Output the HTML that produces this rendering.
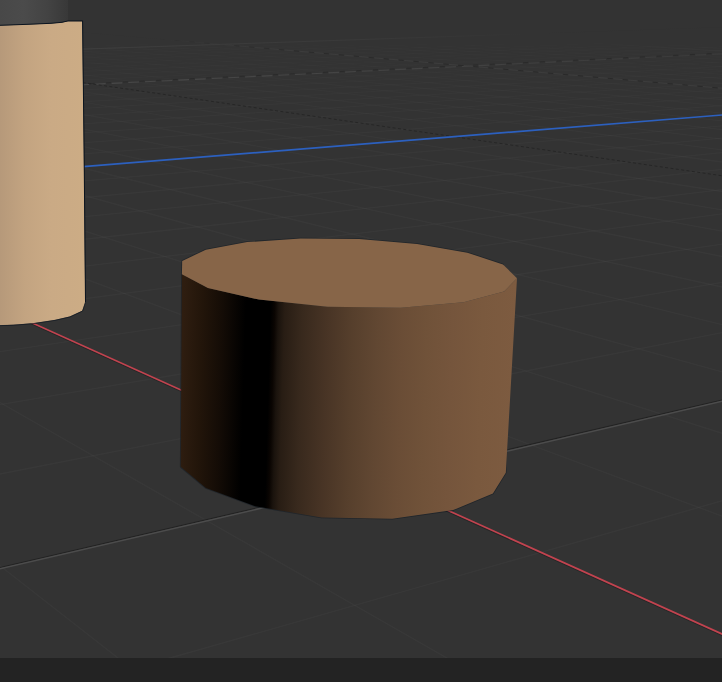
<!DOCTYPE html>
<html><head><meta charset="utf-8"><title>Viewport</title>
<style>html,body{margin:0;padding:0;background:#333333;overflow:hidden}svg{display:block}</style>
</head><body>
<svg width="722" height="682" viewBox="0 0 722 682">
<defs>
<linearGradient id="gs" gradientUnits="userSpaceOnUse" x1="181.0" y1="400" x2="512.70" y2="409.95"><stop offset="0.0000" stop-color="#2e1d10"/><stop offset="0.0572" stop-color="#22150a"/><stop offset="0.1175" stop-color="#140c06"/><stop offset="0.1867" stop-color="#000000"/><stop offset="0.2620" stop-color="#000000"/><stop offset="0.2741" stop-color="#0a0502"/><stop offset="0.2861" stop-color="#1a130d"/><stop offset="0.3042" stop-color="#281d14"/><stop offset="0.3584" stop-color="#38291d"/><stop offset="0.4337" stop-color="#483425"/><stop offset="0.5090" stop-color="#563f2c"/><stop offset="0.5843" stop-color="#614732"/><stop offset="0.6596" stop-color="#6a4d36"/><stop offset="0.7349" stop-color="#705239"/><stop offset="0.8102" stop-color="#75553c"/><stop offset="0.9006" stop-color="#7a593e"/><stop offset="1.0000" stop-color="#7d5b40"/></linearGradient>
<linearGradient id="gb" gradientUnits="userSpaceOnUse" x1="0" y1="0" x2="85" y2="0">
<stop offset="0" stop-color="#b6997a"/><stop offset="0.3" stop-color="#c3a481"/><stop offset="0.6" stop-color="#caaa85"/><stop offset="1" stop-color="#ccac85"/>
</linearGradient>
<linearGradient id="gd" gradientUnits="userSpaceOnUse" x1="0" y1="0" x2="68" y2="0">
<stop offset="0" stop-color="#484848"/><stop offset="0.35" stop-color="#4b4b4b"/><stop offset="0.7" stop-color="#434343"/><stop offset="1" stop-color="#383838"/>
</linearGradient>
<linearGradient id="gl" gradientUnits="userSpaceOnUse" x1="84" y1="0" x2="722" y2="0"><stop offset="0" stop-color="#484848"/><stop offset="0.5" stop-color="#434343"/><stop offset="1" stop-color="#3a3a3a"/></linearGradient>
<linearGradient id="gl2" gradientUnits="userSpaceOnUse" x1="150" y1="0" x2="722" y2="0"><stop offset="0" stop-color="#323232"/><stop offset="0.25" stop-color="#3c3c3c"/><stop offset="1" stop-color="#3c3c3c"/></linearGradient>
<linearGradient id="gl3" gradientUnits="userSpaceOnUse" x1="150" y1="0" x2="722" y2="0"><stop offset="0" stop-color="#323232"/><stop offset="0.3" stop-color="#2a2a2a"/><stop offset="1" stop-color="#292929"/></linearGradient>
<linearGradient id="gl4" gradientUnits="userSpaceOnUse" x1="84" y1="0" x2="560" y2="0"><stop offset="0" stop-color="#3d3d3d"/><stop offset="0.6" stop-color="#393939"/><stop offset="1" stop-color="#323232"/></linearGradient>
<linearGradient id="fm" gradientUnits="userSpaceOnUse" x1="0" y1="0" x2="0" y2="682"><stop offset="0.0000" stop-color="#fff" stop-opacity="0.000"/><stop offset="0.0440" stop-color="#fff" stop-opacity="0.000"/><stop offset="0.0528" stop-color="#fff" stop-opacity="0.000"/><stop offset="0.0616" stop-color="#fff" stop-opacity="0.036"/><stop offset="0.0704" stop-color="#fff" stop-opacity="0.320"/><stop offset="0.0806" stop-color="#fff" stop-opacity="0.320"/><stop offset="0.1026" stop-color="#fff" stop-opacity="0.392"/><stop offset="0.1246" stop-color="#fff" stop-opacity="0.518"/><stop offset="0.1466" stop-color="#fff" stop-opacity="0.617"/><stop offset="0.1760" stop-color="#fff" stop-opacity="0.721"/><stop offset="0.2053" stop-color="#fff" stop-opacity="0.801"/><stop offset="0.2346" stop-color="#fff" stop-opacity="0.866"/><stop offset="0.2786" stop-color="#fff" stop-opacity="0.942"/><stop offset="0.3226" stop-color="#fff" stop-opacity="1.000"/><stop offset="0.3812" stop-color="#fff" stop-opacity="1.000"/><stop offset="0.4399" stop-color="#fff" stop-opacity="1.000"/><stop offset="1.0000" stop-color="#fff" stop-opacity="1.000"/></linearGradient>
<mask id="fade" maskUnits="userSpaceOnUse" x="0" y="0" width="722" height="682"><rect width="722" height="682" fill="url(#fm)"/></mask>
</defs>
<rect width="722" height="682" fill="#333333"/>
<g id="grid" mask="url(#fade)" stroke-linecap="butt">
<line x1="-763.1" y1="3.9" x2="1599.9" y2="-25.1" stroke="#ffffff" stroke-width="1.3" stroke-opacity="0.027" />
<line x1="-762.9" y1="4.5" x2="1599.7" y2="-24.9" stroke="#ffffff" stroke-width="1.3" stroke-opacity="0.027" />
<line x1="-762.7" y1="5.0" x2="1599.5" y2="-24.8" stroke="#ffffff" stroke-width="1.3" stroke-opacity="0.027" />
<line x1="-762.5" y1="5.5" x2="1599.4" y2="-24.6" stroke="#ffffff" stroke-width="1.3" stroke-opacity="0.027" />
<line x1="-762.3" y1="6.1" x2="1599.2" y2="-24.4" stroke="#ffffff" stroke-width="1.3" stroke-opacity="0.027" />
<line x1="-762.2" y1="6.6" x2="1599.0" y2="-24.2" stroke="#ffffff" stroke-width="1.3" stroke-opacity="0.027" />
<line x1="-761.8" y1="7.8" x2="1598.7" y2="-23.9" stroke="#ffffff" stroke-width="1.3" stroke-opacity="0.027" />
<line x1="-761.6" y1="8.4" x2="1598.5" y2="-23.7" stroke="#ffffff" stroke-width="1.3" stroke-opacity="0.027" />
<line x1="-761.3" y1="9.0" x2="1598.3" y2="-23.5" stroke="#ffffff" stroke-width="1.3" stroke-opacity="0.027" />
<line x1="-761.1" y1="9.7" x2="1598.1" y2="-23.3" stroke="#ffffff" stroke-width="1.3" stroke-opacity="0.027" />
<line x1="-760.9" y1="10.3" x2="1597.9" y2="-23.1" stroke="#ffffff" stroke-width="1.3" stroke-opacity="0.027" />
<line x1="-760.7" y1="11.0" x2="1597.7" y2="-22.9" stroke="#ffffff" stroke-width="1.3" stroke-opacity="0.027" />
<line x1="-760.4" y1="11.7" x2="1597.5" y2="-22.7" stroke="#ffffff" stroke-width="1.3" stroke-opacity="0.027" />
<line x1="-760.2" y1="12.4" x2="1597.3" y2="-22.5" stroke="#ffffff" stroke-width="1.3" stroke-opacity="0.027" />
<line x1="-760.0" y1="13.1" x2="1597.1" y2="-22.3" stroke="#ffffff" stroke-width="1.3" stroke-opacity="0.027" />
<line x1="-759.5" y1="14.6" x2="1596.7" y2="-21.8" stroke="#ffffff" stroke-width="1.3" stroke-opacity="0.027" />
<line x1="-759.2" y1="15.4" x2="1596.4" y2="-21.6" stroke="#ffffff" stroke-width="1.3" stroke-opacity="0.027" />
<line x1="-758.9" y1="16.2" x2="1596.2" y2="-21.3" stroke="#ffffff" stroke-width="1.3" stroke-opacity="0.027" />
<line x1="-758.6" y1="17.0" x2="1595.9" y2="-21.1" stroke="#ffffff" stroke-width="1.3" stroke-opacity="0.027" />
<line x1="-758.4" y1="17.8" x2="1595.7" y2="-20.8" stroke="#ffffff" stroke-width="1.3" stroke-opacity="0.027" />
<line x1="-758.1" y1="18.7" x2="1595.4" y2="-20.5" stroke="#ffffff" stroke-width="1.3" stroke-opacity="0.027" />
<line x1="-757.8" y1="19.6" x2="1595.2" y2="-20.3" stroke="#ffffff" stroke-width="1.3" stroke-opacity="0.027" />
<line x1="-757.4" y1="20.5" x2="1594.9" y2="-20.0" stroke="#ffffff" stroke-width="1.3" stroke-opacity="0.027" />
<line x1="-757.1" y1="21.5" x2="1594.6" y2="-19.7" stroke="#ffffff" stroke-width="1.3" stroke-opacity="0.027" />
<line x1="-756.4" y1="23.5" x2="1599.6" y2="-19.2" stroke="#ffffff" stroke-width="1.3" stroke-opacity="0.027" />
<line x1="-756.1" y1="24.5" x2="1599.4" y2="-18.9" stroke="#ffffff" stroke-width="1.3" stroke-opacity="0.027" />
<line x1="-755.7" y1="25.6" x2="1599.2" y2="-18.5" stroke="#ffffff" stroke-width="1.3" stroke-opacity="0.027" />
<line x1="-755.4" y1="26.7" x2="1599.0" y2="-18.2" stroke="#ffffff" stroke-width="1.3" stroke-opacity="0.027" />
<line x1="-755.0" y1="27.8" x2="1598.7" y2="-17.8" stroke="#ffffff" stroke-width="1.3" stroke-opacity="0.027" />
<line x1="-754.6" y1="29.0" x2="1598.5" y2="-17.5" stroke="#ffffff" stroke-width="1.3" stroke-opacity="0.027" />
<line x1="-754.1" y1="30.2" x2="1598.2" y2="-17.1" stroke="#ffffff" stroke-width="1.3" stroke-opacity="0.027" />
<line x1="-753.7" y1="31.5" x2="1597.9" y2="-16.7" stroke="#ffffff" stroke-width="1.3" stroke-opacity="0.027" />
<line x1="-753.3" y1="32.8" x2="1597.6" y2="-16.3" stroke="#ffffff" stroke-width="1.3" stroke-opacity="0.027" />
<line x1="-752.3" y1="35.6" x2="1597.0" y2="-15.5" stroke="#ffffff" stroke-width="1.3" stroke-opacity="0.027" />
<line x1="-751.8" y1="37.0" x2="1596.7" y2="-15.0" stroke="#ffffff" stroke-width="1.3" stroke-opacity="0.027" />
<line x1="-751.3" y1="38.6" x2="1596.4" y2="-14.5" stroke="#ffffff" stroke-width="1.3" stroke-opacity="0.027" />
<line x1="-750.8" y1="40.1" x2="1596.1" y2="-14.0" stroke="#ffffff" stroke-width="1.3" stroke-opacity="0.027" />
<line x1="-750.2" y1="41.8" x2="1595.7" y2="-13.5" stroke="#ffffff" stroke-width="1.3" stroke-opacity="0.027" />
<line x1="-749.7" y1="43.5" x2="1595.3" y2="-13.0" stroke="#ffffff" stroke-width="1.3" stroke-opacity="0.027" />
<line x1="-749.1" y1="45.2" x2="1595.0" y2="-12.5" stroke="#ffffff" stroke-width="1.3" stroke-opacity="0.027" />
<line x1="-748.4" y1="47.1" x2="1594.6" y2="-11.9" stroke="#ffffff" stroke-width="1.3" stroke-opacity="0.027" />
<line x1="-747.8" y1="49.0" x2="1594.1" y2="-11.3" stroke="#ffffff" stroke-width="1.3" stroke-opacity="0.027" />
<line x1="-746.4" y1="53.1" x2="1593.2" y2="-10.0" stroke="#ffffff" stroke-width="1.3" stroke-opacity="0.027" />
<line x1="-745.6" y1="55.3" x2="1592.8" y2="-9.3" stroke="#ffffff" stroke-width="1.3" stroke-opacity="0.027" />
<line x1="-744.9" y1="57.6" x2="1592.3" y2="-8.6" stroke="#ffffff" stroke-width="1.3" stroke-opacity="0.027" />
<line x1="-744.1" y1="60.0" x2="1591.7" y2="-7.9" stroke="#ffffff" stroke-width="1.3" stroke-opacity="0.027" />
<line x1="-743.2" y1="62.5" x2="1591.2" y2="-7.1" stroke="#ffffff" stroke-width="1.3" stroke-opacity="0.027" />
<line x1="-742.3" y1="65.2" x2="1599.9" y2="-6.5" stroke="#ffffff" stroke-width="1.3" stroke-opacity="0.027" />
<line x1="-741.4" y1="67.9" x2="1599.5" y2="-5.7" stroke="#ffffff" stroke-width="1.3" stroke-opacity="0.027" />
<line x1="-740.4" y1="70.9" x2="1599.1" y2="-4.8" stroke="#ffffff" stroke-width="1.3" stroke-opacity="0.027" />
<line x1="-739.3" y1="74.0" x2="1598.7" y2="-3.8" stroke="#ffffff" stroke-width="1.3" stroke-opacity="0.027" />
<line x1="-737.0" y1="80.7" x2="1597.8" y2="-1.7" stroke="#ffffff" stroke-width="1.3" stroke-opacity="0.027" />
<line x1="-735.8" y1="84.3" x2="1597.4" y2="-0.6" stroke="#ffffff" stroke-width="1.3" stroke-opacity="0.027" />
<line x1="-734.5" y1="88.2" x2="1596.9" y2="0.6" stroke="#ffffff" stroke-width="1.3" stroke-opacity="0.027" />
<line x1="-733.1" y1="92.3" x2="1596.3" y2="1.9" stroke="#ffffff" stroke-width="1.3" stroke-opacity="0.027" />
<line x1="-731.6" y1="96.7" x2="1595.7" y2="3.3" stroke="#ffffff" stroke-width="1.3" stroke-opacity="0.027" />
<line x1="-730.0" y1="101.4" x2="1595.1" y2="4.8" stroke="#ffffff" stroke-width="1.3" stroke-opacity="0.027" />
<line x1="-728.3" y1="106.4" x2="1594.5" y2="6.3" stroke="#ffffff" stroke-width="1.3" stroke-opacity="0.027" />
<line x1="-726.5" y1="111.7" x2="1593.8" y2="8.0" stroke="#ffffff" stroke-width="1.3" stroke-opacity="0.027" />
<line x1="-724.5" y1="117.5" x2="1593.0" y2="9.8" stroke="#ffffff" stroke-width="1.3" stroke-opacity="0.027" />
<line x1="-720.2" y1="130.4" x2="1591.3" y2="13.9" stroke="#ffffff" stroke-width="1.3" stroke-opacity="0.027" />
<line x1="-717.7" y1="137.7" x2="1590.3" y2="16.2" stroke="#ffffff" stroke-width="1.3" stroke-opacity="0.027" />
<line x1="-715.0" y1="145.6" x2="1589.2" y2="18.8" stroke="#ffffff" stroke-width="1.3" stroke-opacity="0.027" />
<line x1="-800.0" y1="-23.5" x2="-793.7" y2="-29.3" stroke="#ffffff" stroke-width="1.3" stroke-opacity="0.027" />
<line x1="-712.1" y1="154.2" x2="1588.1" y2="21.5" stroke="#ffffff" stroke-width="1.3" stroke-opacity="0.027" />
<line x1="-799.9" y1="-8.4" x2="-787.3" y2="-29.3" stroke="#ffffff" stroke-width="1.3" stroke-opacity="0.027" />
<line x1="-708.9" y1="163.6" x2="1586.8" y2="24.6" stroke="#ffffff" stroke-width="1.3" stroke-opacity="0.027" />
<line x1="-800.0" y1="115.9" x2="-780.8" y2="-29.3" stroke="#ffffff" stroke-width="1.3" stroke-opacity="0.027" />
<line x1="-705.4" y1="174.0" x2="1585.4" y2="28.0" stroke="#ffffff" stroke-width="1.3" stroke-opacity="0.027" />
<line x1="-774.4" y1="-29.3" x2="-302.2" y2="1362.2" stroke="#ffffff" stroke-width="1.3" stroke-opacity="0.027" />
<line x1="-701.5" y1="185.5" x2="1583.8" y2="31.7" stroke="#ffffff" stroke-width="1.3" stroke-opacity="0.027" />
<line x1="-768.0" y1="-29.4" x2="173.8" y2="1133.6" stroke="#ffffff" stroke-width="1.3" stroke-opacity="0.027" />
<line x1="-697.1" y1="198.3" x2="1582.0" y2="35.9" stroke="#ffffff" stroke-width="1.3" stroke-opacity="0.027" />
<line x1="-761.6" y1="-29.4" x2="838.4" y2="1221.0" stroke="#ffffff" stroke-width="1.3" stroke-opacity="0.027" />
<line x1="-692.3" y1="212.6" x2="1580.0" y2="40.6" stroke="#ffffff" stroke-width="1.3" stroke-opacity="0.027" />
<line x1="-755.2" y1="-29.4" x2="1103.0" y2="1033.2" stroke="#ffffff" stroke-width="1.3" stroke-opacity="0.027" />
<line x1="-680.6" y1="247.0" x2="1575.2" y2="52.1" stroke="#ffffff" stroke-width="1.3" stroke-opacity="0.027" />
<line x1="-742.6" y1="-29.4" x2="1449.8" y2="787.2" stroke="#ffffff" stroke-width="1.3" stroke-opacity="0.027" />
<line x1="-673.5" y1="267.9" x2="1599.9" y2="56.6" stroke="#ffffff" stroke-width="1.3" stroke-opacity="0.027" />
<line x1="-736.3" y1="-29.4" x2="1569.5" y2="702.2" stroke="#ffffff" stroke-width="1.3" stroke-opacity="0.027" />
<line x1="-665.3" y1="292.1" x2="1598.8" y2="64.4" stroke="#ffffff" stroke-width="1.3" stroke-opacity="0.027" />
<line x1="-730.0" y1="-29.5" x2="1380.6" y2="553.9" stroke="#ffffff" stroke-width="1.3" stroke-opacity="0.027" />
<line x1="-655.7" y1="320.3" x2="1597.5" y2="73.6" stroke="#ffffff" stroke-width="1.3" stroke-opacity="0.027" />
<line x1="-723.8" y1="-29.5" x2="1474.5" y2="508.9" stroke="#ffffff" stroke-width="1.3" stroke-opacity="0.027" />
<line x1="-644.4" y1="353.7" x2="1595.9" y2="84.6" stroke="#ffffff" stroke-width="1.3" stroke-opacity="0.027" />
<line x1="-717.5" y1="-29.5" x2="1555.0" y2="470.2" stroke="#ffffff" stroke-width="1.3" stroke-opacity="0.027" />
<line x1="-630.7" y1="393.9" x2="1594.0" y2="97.9" stroke="#ffffff" stroke-width="1.3" stroke-opacity="0.027" />
<line x1="-711.3" y1="-29.5" x2="1418.7" y2="395.5" stroke="#ffffff" stroke-width="1.3" stroke-opacity="0.027" />
<line x1="-614.0" y1="443.2" x2="1591.6" y2="114.5" stroke="#ffffff" stroke-width="1.3" stroke-opacity="0.027" />
<line x1="-705.2" y1="-29.5" x2="1486.8" y2="370.8" stroke="#ffffff" stroke-width="1.3" stroke-opacity="0.027" />
<line x1="-593.1" y1="505.0" x2="1588.6" y2="135.7" stroke="#ffffff" stroke-width="1.3" stroke-opacity="0.027" />
<line x1="-699.0" y1="-29.5" x2="1547.4" y2="348.8" stroke="#ffffff" stroke-width="1.3" stroke-opacity="0.027" />
<line x1="-566.0" y1="584.8" x2="1584.6" y2="163.7" stroke="#ffffff" stroke-width="1.3" stroke-opacity="0.027" />
<line x1="-692.9" y1="-29.5" x2="1440.8" y2="303.8" stroke="#ffffff" stroke-width="1.3" stroke-opacity="0.027" />
<line x1="-478.5" y1="842.7" x2="1571.0" y2="259.0" stroke="#ffffff" stroke-width="1.3" stroke-opacity="0.027" />
<line x1="-680.7" y1="-29.6" x2="1542.8" y2="274.1" stroke="#ffffff" stroke-width="1.3" stroke-opacity="0.027" />
<line x1="-400.8" y1="1071.6" x2="1558.0" y2="350.5" stroke="#ffffff" stroke-width="1.3" stroke-opacity="0.027" />
<line x1="-674.6" y1="-29.6" x2="1587.4" y2="261.1" stroke="#ffffff" stroke-width="1.3" stroke-opacity="0.027" />
<line x1="579.9" y1="1018.9" x2="1533.3" y2="523.3" stroke="#ffffff" stroke-width="1.3" stroke-opacity="0.027" />
<line x1="-668.6" y1="-29.6" x2="1499.0" y2="233.4" stroke="#ffffff" stroke-width="1.3" stroke-opacity="0.027" />
<line x1="1023.0" y1="1365.2" x2="1469.4" y2="971.1" stroke="#ffffff" stroke-width="1.3" stroke-opacity="0.027" />
<line x1="-662.6" y1="-29.6" x2="1539.6" y2="223.5" stroke="#ffffff" stroke-width="1.3" stroke-opacity="0.027" />
<line x1="-656.6" y1="-29.6" x2="1577.4" y2="214.3" stroke="#ffffff" stroke-width="1.3" stroke-opacity="0.027" />
<line x1="-650.6" y1="-29.6" x2="1502.4" y2="194.3" stroke="#ffffff" stroke-width="1.3" stroke-opacity="0.027" />
<line x1="-644.7" y1="-29.7" x2="1537.3" y2="187.0" stroke="#ffffff" stroke-width="1.3" stroke-opacity="0.027" />
<line x1="-638.7" y1="-29.7" x2="1570.1" y2="180.1" stroke="#ffffff" stroke-width="1.3" stroke-opacity="0.027" />
<line x1="-632.8" y1="-29.7" x2="1505.0" y2="165.0" stroke="#ffffff" stroke-width="1.3" stroke-opacity="0.027" />
<line x1="-621.1" y1="-29.7" x2="1564.5" y2="154.1" stroke="#ffffff" stroke-width="1.3" stroke-opacity="0.027" />
<line x1="-615.2" y1="-29.7" x2="1591.9" y2="149.1" stroke="#ffffff" stroke-width="1.3" stroke-opacity="0.027" />
<line x1="-609.4" y1="-29.7" x2="1534.3" y2="137.8" stroke="#ffffff" stroke-width="1.3" stroke-opacity="0.027" />
<line x1="-603.6" y1="-29.8" x2="1560.1" y2="133.6" stroke="#ffffff" stroke-width="1.3" stroke-opacity="0.027" />
<line x1="-597.8" y1="-29.8" x2="1584.8" y2="129.6" stroke="#ffffff" stroke-width="1.3" stroke-opacity="0.027" />
<line x1="-592.1" y1="-29.8" x2="1533.2" y2="120.4" stroke="#ffffff" stroke-width="1.3" stroke-opacity="0.027" />
<line x1="-586.3" y1="-29.8" x2="1556.6" y2="117.0" stroke="#ffffff" stroke-width="1.3" stroke-opacity="0.027" />
<line x1="-580.6" y1="-29.8" x2="1579.0" y2="113.7" stroke="#ffffff" stroke-width="1.3" stroke-opacity="0.027" />
<line x1="-574.9" y1="-29.8" x2="1532.3" y2="106.2" stroke="#ffffff" stroke-width="1.3" stroke-opacity="0.027" />
<line x1="-563.6" y1="-29.9" x2="1574.2" y2="100.6" stroke="#ffffff" stroke-width="1.3" stroke-opacity="0.027" />
<line x1="-557.9" y1="-29.9" x2="1594.0" y2="97.9" stroke="#ffffff" stroke-width="1.3" stroke-opacity="0.027" />
<line x1="-552.3" y1="-29.9" x2="1551.2" y2="91.8" stroke="#ffffff" stroke-width="1.3" stroke-opacity="0.027" />
<line x1="-546.7" y1="-29.9" x2="1570.2" y2="89.5" stroke="#ffffff" stroke-width="1.3" stroke-opacity="0.027" />
<line x1="-541.1" y1="-29.9" x2="1588.5" y2="87.3" stroke="#ffffff" stroke-width="1.3" stroke-opacity="0.027" />
<line x1="-535.6" y1="-29.9" x2="1549.1" y2="82.1" stroke="#ffffff" stroke-width="1.3" stroke-opacity="0.027" />
<line x1="-530.0" y1="-29.9" x2="1566.8" y2="80.1" stroke="#ffffff" stroke-width="1.3" stroke-opacity="0.027" />
<line x1="-524.5" y1="-30.0" x2="1583.8" y2="78.2" stroke="#ffffff" stroke-width="1.3" stroke-opacity="0.027" />
<line x1="-519.0" y1="-30.0" x2="1547.3" y2="73.7" stroke="#ffffff" stroke-width="1.3" stroke-opacity="0.027" />
<line x1="-508.1" y1="-30.0" x2="1579.7" y2="70.3" stroke="#ffffff" stroke-width="1.3" stroke-opacity="0.027" />
<line x1="-502.6" y1="-30.0" x2="1595.2" y2="68.7" stroke="#ffffff" stroke-width="1.3" stroke-opacity="0.027" />
<line x1="-497.2" y1="-30.0" x2="1561.2" y2="64.8" stroke="#ffffff" stroke-width="1.3" stroke-opacity="0.027" />
<line x1="-491.8" y1="-30.0" x2="1576.2" y2="63.4" stroke="#ffffff" stroke-width="1.3" stroke-opacity="0.027" />
<line x1="-486.4" y1="-30.0" x2="1590.7" y2="62.0" stroke="#ffffff" stroke-width="1.3" stroke-opacity="0.027" />
<line x1="-481.0" y1="-30.1" x2="1558.9" y2="58.6" stroke="#ffffff" stroke-width="1.3" stroke-opacity="0.027" />
<line x1="-475.7" y1="-30.1" x2="1573.0" y2="57.3" stroke="#ffffff" stroke-width="1.3" stroke-opacity="0.027" />
<line x1="-470.4" y1="-30.1" x2="1586.8" y2="56.0" stroke="#ffffff" stroke-width="1.3" stroke-opacity="0.027" />
<line x1="-465.1" y1="-30.1" x2="1556.9" y2="53.0" stroke="#ffffff" stroke-width="1.3" stroke-opacity="0.027" />
<line x1="-454.5" y1="-30.1" x2="1583.3" y2="50.8" stroke="#ffffff" stroke-width="1.3" stroke-opacity="0.027" />
<line x1="-449.2" y1="-30.1" x2="1596.0" y2="49.7" stroke="#ffffff" stroke-width="1.3" stroke-opacity="0.027" />
<line x1="-444.0" y1="-30.1" x2="1567.7" y2="47.1" stroke="#ffffff" stroke-width="1.3" stroke-opacity="0.027" />
<line x1="-438.8" y1="-30.2" x2="1580.1" y2="46.1" stroke="#ffffff" stroke-width="1.3" stroke-opacity="0.027" />
<line x1="-433.6" y1="-30.2" x2="1592.2" y2="45.1" stroke="#ffffff" stroke-width="1.3" stroke-opacity="0.027" />
<line x1="-428.4" y1="-30.2" x2="1565.5" y2="42.7" stroke="#ffffff" stroke-width="1.3" stroke-opacity="0.027" />
<line x1="-423.2" y1="-30.2" x2="1577.3" y2="41.8" stroke="#ffffff" stroke-width="1.3" stroke-opacity="0.027" />
<line x1="-418.1" y1="-30.2" x2="1588.8" y2="40.9" stroke="#ffffff" stroke-width="1.3" stroke-opacity="0.027" />
<line x1="-412.9" y1="-30.2" x2="1563.5" y2="38.8" stroke="#ffffff" stroke-width="1.3" stroke-opacity="0.027" />
<line x1="-402.7" y1="-30.2" x2="1585.7" y2="37.2" stroke="#ffffff" stroke-width="1.3" stroke-opacity="0.027" />
<line x1="-397.6" y1="-30.3" x2="1596.5" y2="36.4" stroke="#ffffff" stroke-width="1.3" stroke-opacity="0.027" />
<line x1="-392.6" y1="-30.3" x2="1572.4" y2="34.5" stroke="#ffffff" stroke-width="1.3" stroke-opacity="0.027" />
<line x1="-387.5" y1="-30.3" x2="1582.9" y2="33.7" stroke="#ffffff" stroke-width="1.3" stroke-opacity="0.027" />
<line x1="-382.5" y1="-30.3" x2="1593.3" y2="33.0" stroke="#ffffff" stroke-width="1.3" stroke-opacity="0.027" />
<line x1="-377.5" y1="-30.3" x2="1570.3" y2="31.3" stroke="#ffffff" stroke-width="1.3" stroke-opacity="0.027" />
<line x1="-372.5" y1="-30.3" x2="1580.4" y2="30.6" stroke="#ffffff" stroke-width="1.3" stroke-opacity="0.027" />
<line x1="-367.5" y1="-30.3" x2="1590.3" y2="30.0" stroke="#ffffff" stroke-width="1.3" stroke-opacity="0.027" />
<line x1="-362.5" y1="-30.3" x2="1568.3" y2="28.4" stroke="#ffffff" stroke-width="1.3" stroke-opacity="0.027" />
<line x1="-352.7" y1="-30.4" x2="1587.6" y2="27.1" stroke="#ffffff" stroke-width="1.3" stroke-opacity="0.027" />
<line x1="-347.7" y1="-30.4" x2="1596.9" y2="26.5" stroke="#ffffff" stroke-width="1.3" stroke-opacity="0.027" />
<line x1="-342.8" y1="-30.4" x2="1575.9" y2="25.1" stroke="#ffffff" stroke-width="1.3" stroke-opacity="0.027" />
<line x1="-338.0" y1="-30.4" x2="1585.0" y2="24.5" stroke="#ffffff" stroke-width="1.3" stroke-opacity="0.027" />
<line x1="-333.1" y1="-30.4" x2="1594.0" y2="24.0" stroke="#ffffff" stroke-width="1.3" stroke-opacity="0.027" />
<line x1="-328.2" y1="-30.4" x2="1573.9" y2="22.7" stroke="#ffffff" stroke-width="1.3" stroke-opacity="0.027" />
<line x1="-323.4" y1="-30.4" x2="1582.7" y2="22.1" stroke="#ffffff" stroke-width="1.3" stroke-opacity="0.027" />
<line x1="-318.6" y1="-30.4" x2="1591.4" y2="21.6" stroke="#ffffff" stroke-width="1.3" stroke-opacity="0.027" />
<line x1="-313.8" y1="-30.5" x2="1600.0" y2="21.1" stroke="#ffffff" stroke-width="1.3" stroke-opacity="0.027" />
<line x1="-304.2" y1="-30.5" x2="1588.9" y2="19.4" stroke="#ffffff" stroke-width="1.3" stroke-opacity="0.027" />
<line x1="-299.5" y1="-30.5" x2="1597.2" y2="19.0" stroke="#ffffff" stroke-width="1.3" stroke-opacity="0.027" />
<line x1="-294.7" y1="-30.5" x2="1578.5" y2="17.8" stroke="#ffffff" stroke-width="1.3" stroke-opacity="0.027" />
<line x1="-290.0" y1="-30.5" x2="1586.7" y2="17.4" stroke="#ffffff" stroke-width="1.3" stroke-opacity="0.027" />
<line x1="-285.3" y1="-30.5" x2="1594.7" y2="17.0" stroke="#ffffff" stroke-width="1.3" stroke-opacity="0.027" />
<line x1="-280.6" y1="-30.5" x2="1576.7" y2="15.9" stroke="#ffffff" stroke-width="1.3" stroke-opacity="0.027" />
<line x1="-275.9" y1="-30.5" x2="1584.5" y2="15.5" stroke="#ffffff" stroke-width="1.3" stroke-opacity="0.027" />
<line x1="-271.3" y1="-30.6" x2="1592.3" y2="15.1" stroke="#ffffff" stroke-width="1.3" stroke-opacity="0.027" />
<line x1="-266.6" y1="-30.6" x2="1599.9" y2="14.7" stroke="#ffffff" stroke-width="1.3" stroke-opacity="0.027" />
<line x1="-257.4" y1="-30.6" x2="1590.1" y2="13.3" stroke="#ffffff" stroke-width="1.3" stroke-opacity="0.027" />
<line x1="-252.8" y1="-30.6" x2="1597.5" y2="13.0" stroke="#ffffff" stroke-width="1.3" stroke-opacity="0.027" />
<line x1="-248.2" y1="-30.6" x2="1580.7" y2="12.1" stroke="#ffffff" stroke-width="1.3" stroke-opacity="0.027" />
<line x1="-243.6" y1="-30.6" x2="1588.0" y2="11.7" stroke="#ffffff" stroke-width="1.3" stroke-opacity="0.027" />
<line x1="-239.0" y1="-30.6" x2="1595.2" y2="11.4" stroke="#ffffff" stroke-width="1.3" stroke-opacity="0.027" />
<line x1="-234.5" y1="-30.6" x2="1578.9" y2="10.5" stroke="#ffffff" stroke-width="1.3" stroke-opacity="0.027" />
<line x1="-230.0" y1="-30.7" x2="1586.0" y2="10.2" stroke="#ffffff" stroke-width="1.3" stroke-opacity="0.027" />
<line x1="-225.4" y1="-30.7" x2="1593.0" y2="9.8" stroke="#ffffff" stroke-width="1.3" stroke-opacity="0.027" />
<line x1="-220.9" y1="-30.7" x2="1599.9" y2="9.5" stroke="#ffffff" stroke-width="1.3" stroke-opacity="0.027" />
<line x1="-212.0" y1="-30.7" x2="1590.9" y2="8.4" stroke="#ffffff" stroke-width="1.3" stroke-opacity="0.027" />
<line x1="-207.5" y1="-30.7" x2="1597.7" y2="8.1" stroke="#ffffff" stroke-width="1.3" stroke-opacity="0.027" />
<line x1="-203.1" y1="-30.7" x2="1582.4" y2="7.3" stroke="#ffffff" stroke-width="1.3" stroke-opacity="0.027" />
<line x1="-198.6" y1="-30.7" x2="1589.0" y2="7.0" stroke="#ffffff" stroke-width="1.3" stroke-opacity="0.027" />
<line x1="-194.2" y1="-30.7" x2="1595.6" y2="6.8" stroke="#ffffff" stroke-width="1.3" stroke-opacity="0.027" />
<line x1="-189.8" y1="-30.8" x2="1580.8" y2="6.0" stroke="#ffffff" stroke-width="1.3" stroke-opacity="0.027" />
<line x1="-185.4" y1="-30.8" x2="1587.2" y2="5.8" stroke="#ffffff" stroke-width="1.3" stroke-opacity="0.027" />
<line x1="-181.1" y1="-30.8" x2="1593.6" y2="5.5" stroke="#ffffff" stroke-width="1.3" stroke-opacity="0.027" />
<line x1="-176.7" y1="-30.8" x2="1599.9" y2="5.2" stroke="#ffffff" stroke-width="1.3" stroke-opacity="0.027" />
<line x1="-168.0" y1="-30.8" x2="1591.7" y2="4.3" stroke="#ffffff" stroke-width="1.3" stroke-opacity="0.027" />
<line x1="-163.7" y1="-30.8" x2="1597.8" y2="4.1" stroke="#ffffff" stroke-width="1.3" stroke-opacity="0.027" />
<line x1="-159.4" y1="-30.8" x2="1583.9" y2="3.4" stroke="#ffffff" stroke-width="1.3" stroke-opacity="0.027" />
<line x1="-155.1" y1="-30.8" x2="1589.9" y2="3.2" stroke="#ffffff" stroke-width="1.3" stroke-opacity="0.027" />
<line x1="-150.8" y1="-30.8" x2="1595.9" y2="2.9" stroke="#ffffff" stroke-width="1.3" stroke-opacity="0.027" />
<line x1="-146.5" y1="-30.9" x2="1582.3" y2="2.3" stroke="#ffffff" stroke-width="1.3" stroke-opacity="0.027" />
<line x1="-142.3" y1="-30.9" x2="1588.2" y2="2.1" stroke="#ffffff" stroke-width="1.3" stroke-opacity="0.027" />
<line x1="-138.0" y1="-30.9" x2="1594.1" y2="1.9" stroke="#ffffff" stroke-width="1.3" stroke-opacity="0.027" />
<line x1="-133.8" y1="-30.9" x2="1599.8" y2="1.6" stroke="#ffffff" stroke-width="1.3" stroke-opacity="0.027" />
<line x1="-125.4" y1="-30.9" x2="1592.3" y2="0.9" stroke="#ffffff" stroke-width="1.3" stroke-opacity="0.027" />
<line x1="-121.2" y1="-30.9" x2="1598.0" y2="0.6" stroke="#ffffff" stroke-width="1.3" stroke-opacity="0.027" />
<line x1="-117.0" y1="-30.9" x2="1585.1" y2="0.1" stroke="#ffffff" stroke-width="1.3" stroke-opacity="0.027" />
<line x1="-112.9" y1="-30.9" x2="1590.7" y2="-0.1" stroke="#ffffff" stroke-width="1.3" stroke-opacity="0.027" />
<line x1="-108.7" y1="-31.0" x2="1596.2" y2="-0.3" stroke="#ffffff" stroke-width="1.3" stroke-opacity="0.027" />
<line x1="-104.6" y1="-31.0" x2="1583.6" y2="-0.8" stroke="#ffffff" stroke-width="1.3" stroke-opacity="0.027" />
<line x1="-100.4" y1="-31.0" x2="1589.1" y2="-1.0" stroke="#ffffff" stroke-width="1.3" stroke-opacity="0.027" />
<line x1="-96.3" y1="-31.0" x2="1594.5" y2="-1.2" stroke="#ffffff" stroke-width="1.3" stroke-opacity="0.027" />
<line x1="-92.2" y1="-31.0" x2="1599.8" y2="-1.4" stroke="#ffffff" stroke-width="1.3" stroke-opacity="0.027" />
<line x1="-84.1" y1="-31.0" x2="1592.8" y2="-2.1" stroke="#ffffff" stroke-width="1.3" stroke-opacity="0.027" />
<line x1="-80.0" y1="-31.0" x2="1598.1" y2="-2.3" stroke="#ffffff" stroke-width="1.3" stroke-opacity="0.027" />
<line x1="-75.9" y1="-31.0" x2="1586.1" y2="-2.7" stroke="#ffffff" stroke-width="1.3" stroke-opacity="0.027" />
<line x1="-71.9" y1="-31.0" x2="1591.3" y2="-2.9" stroke="#ffffff" stroke-width="1.3" stroke-opacity="0.027" />
<line x1="-67.9" y1="-31.0" x2="1596.4" y2="-3.1" stroke="#ffffff" stroke-width="1.3" stroke-opacity="0.027" />
<line x1="-63.9" y1="-31.1" x2="1584.8" y2="-3.5" stroke="#ffffff" stroke-width="1.3" stroke-opacity="0.027" />
<line x1="-59.8" y1="-31.1" x2="1589.8" y2="-3.7" stroke="#ffffff" stroke-width="1.3" stroke-opacity="0.027" />
<line x1="-55.9" y1="-31.1" x2="1594.8" y2="-3.9" stroke="#ffffff" stroke-width="1.3" stroke-opacity="0.027" />
<line x1="-51.9" y1="-31.1" x2="1599.8" y2="-4.0" stroke="#ffffff" stroke-width="1.3" stroke-opacity="0.027" />
<line x1="-44.0" y1="-31.1" x2="1593.3" y2="-4.6" stroke="#ffffff" stroke-width="1.3" stroke-opacity="0.027" />
<line x1="-40.0" y1="-31.1" x2="1598.2" y2="-4.8" stroke="#ffffff" stroke-width="1.3" stroke-opacity="0.027" />
<line x1="-36.1" y1="-31.1" x2="1587.0" y2="-5.2" stroke="#ffffff" stroke-width="1.3" stroke-opacity="0.027" />
<line x1="-32.2" y1="-31.1" x2="1591.9" y2="-5.3" stroke="#ffffff" stroke-width="1.3" stroke-opacity="0.027" />
<line x1="-738.2" y1="77.2" x2="1598.3" y2="-2.8" stroke="#ffffff" stroke-width="1.2" stroke-opacity="0.060" />
<line x1="-747.1" y1="51.0" x2="1593.7" y2="-10.7" stroke="#ffffff" stroke-width="1.2" stroke-opacity="0.060" />
<line x1="-752.8" y1="34.2" x2="1597.3" y2="-15.9" stroke="#ffffff" stroke-width="1.2" stroke-opacity="0.060" />
<line x1="-569.2" y1="-29.8" x2="1553.7" y2="103.3" stroke="#ffffff" stroke-width="1.2" stroke-opacity="0.050" />
<line x1="-513.5" y1="-30.0" x2="1563.8" y2="71.9" stroke="#ffffff" stroke-width="1.2" stroke-opacity="0.050" />
<line x1="-459.8" y1="-30.1" x2="1570.2" y2="51.9" stroke="#ffffff" stroke-width="1.2" stroke-opacity="0.050" />
</g>
<g id="major">
<line x1="-529.7" y1="690.6" x2="1579.1" y2="201.1" stroke="#232323" stroke-width="1.2" />
<line x1="-529.7" y1="691.8" x2="1579.1" y2="202.3" stroke="#4c4c4c" stroke-width="1.5" />
<line x1="-722.4" y1="122.9" x2="1592.2" y2="11.0" stroke="#2a2a2a" stroke-width="1" stroke-dasharray="5 11.7" stroke-dashoffset="-11.2"/>
<line x1="-722.4" y1="123.7" x2="1592.2" y2="11.8" stroke="url(#gl)" stroke-width="1.1" stroke-dasharray="10.7 6"/>
<line x1="-626.9" y1="-29.7" x2="1535.6" y2="159.4" stroke="url(#gl3)" stroke-width="1" stroke-dasharray="5 10" stroke-dashoffset="-9.5"/>
<line x1="-626.9" y1="-29.7" x2="1535.6" y2="159.4" stroke="url(#gl2)" stroke-width="1" stroke-dasharray="9 6"/>
<line x1="-738.2" y1="77.2" x2="1598.3" y2="-2.8" stroke="url(#gl4)" stroke-width="1" />
<line x1="-686.8" y1="-29.6" x2="1494.1" y2="288.3" stroke="#262626" stroke-width="1" stroke-dasharray="3 2.4"/>
</g>
<line x1="-766.5" y1="235.2" x2="1583.9" y2="45.5" stroke="#2c60bf" stroke-width="1.6" />
<line x1="-638.5" y1="21.7" x2="1537.3" y2="1003.1" stroke="#1e1e1e" stroke-width="1.2" stroke-opacity="0.600" />
<line x1="-638.5" y1="20.4" x2="1537.3" y2="1001.8" stroke="#c2434f" stroke-width="1.7" />
<polygon points="0,0 68,0 68,21 62,22.5 51,23.5 28,24.5 0,25.5" fill="url(#gd)"/>
<polygon points="0,25.5 28,24.5 51,23.5 62,22.5 68,21.3 82.2,21.3 83.8,150 85.2,302.4 82.3,310.7 69.8,316.5 54.8,319.9 33.2,323.2 13.3,324.8 0,325.2" fill="url(#gb)"/>
<polyline points="0,25.3 28,24.3 51,23.3 62,22.3 68,20.9 82.6,20.9 84.1,150 85.5,302" fill="none" stroke="#0b141f" stroke-width="1"/>
<polyline points="85.5,302 82.6,311 70,316.9 55,320.3 33.2,323.6 13.3,325.2 0,325.6" fill="none" stroke="#0b141f" stroke-width="0.9" stroke-opacity="0.75"/>
<polygon points="181.9,274.2 182.2,260.9 205.8,249.8 247.2,242.1 300.5,238.5 359.2,239.1 417.1,244.0 467.4,252.7 503.0,264.5 505.8,472.7 492.9,493.5 453.2,510.1 392.3,518.8 321.5,517.4 255.2,506.3 205.9,488.1 180.7,466.8" fill="none" stroke="#0e1822" stroke-width="1.6" stroke-opacity="0.5" stroke-linejoin="round"/>
<polygon points="181.9,274.2 207.9,287.9 258.9,299.6 327.5,306.8 400.7,307.7 463.6,302.2 504.1,291.5 517.0,278.2 505.8,472.7 492.9,493.5 453.2,510.1 392.3,518.8 321.5,517.4 255.2,506.3 205.9,488.1 180.7,466.8" fill="url(#gs)"/>
<polygon points="463.6,302.2 504.1,291.5 517.0,278.2 503.0,264.5 467.4,252.7 417.1,244.0 359.2,239.1 300.5,238.5 247.2,242.1 205.8,249.8 182.2,260.9 181.9,274.2 207.9,287.9 258.9,299.6 327.5,306.8 400.7,307.7" fill="#876548"/>
<rect x="0" y="658" width="722" height="24" fill="#232323"/>
</svg>
</body></html>
